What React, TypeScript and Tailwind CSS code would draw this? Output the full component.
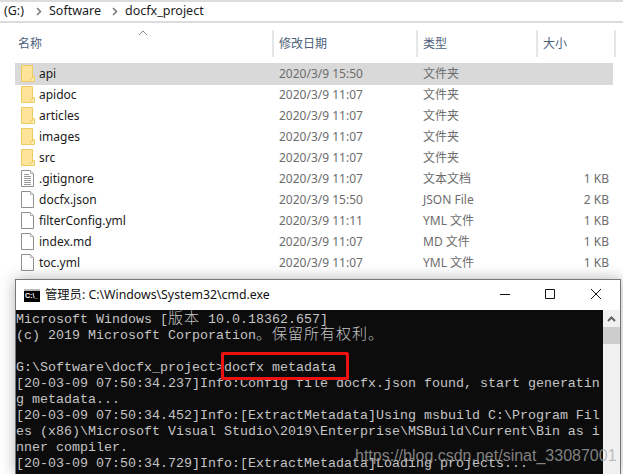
import React from "react";

type Row = { name: string; date: string; type: string; size?: string; icon: "folder" | "text" | "file" };

const rows: Row[] = [
  { name: "api", date: "2020/3/9 15:50", type: "文件夹", icon: "folder" },
  { name: "apidoc", date: "2020/3/9 11:07", type: "文件夹", icon: "folder" },
  { name: "articles", date: "2020/3/9 11:07", type: "文件夹", icon: "folder" },
  { name: "images", date: "2020/3/9 11:07", type: "文件夹", icon: "folder" },
  { name: "src", date: "2020/3/9 11:07", type: "文件夹", icon: "folder" },
  { name: ".gitignore", date: "2020/3/9 11:07", type: "文本文档", size: "1 KB", icon: "text" },
  { name: "docfx.json", date: "2020/3/9 15:50", type: "JSON File", size: "2 KB", icon: "file" },
  { name: "filterConfig.yml", date: "2020/3/9 11:11", type: "YML 文件", size: "1 KB", icon: "file" },
  { name: "index.md", date: "2020/3/9 11:07", type: "MD 文件", size: "1 KB", icon: "file" },
  { name: "toc.yml", date: "2020/3/9 11:07", type: "YML 文件", size: "1 KB", icon: "file" },
];

function FileIcon({ kind }: { kind: Row["icon"] }) {
  if (kind === "folder") {
    return (
      <svg width="14" height="17" viewBox="0 0 14 17" className="block">
        <path d="M.5.5H11.5V16.5H.5Z" fill="#fde49a" stroke="#eccb60" />
        <path d="M11.5 11.5H13.5V16.5H9.5V13.5H11.5Z" fill="#fdeeb8" stroke="#eccb60" />
      </svg>
    );
  }
  return (
    <svg width="14" height="17" viewBox="0 0 14 17" className="block">
      <path d="M.5.5H9.5L12.5 3.5V16.5H.5Z" fill="#fff" stroke="#8f8f8f" />
      <path d="M9.5.5V3.5H12.5" fill="#f0f0f0" stroke="#b0b0b0" />
      {kind === "text" && (
        <path d="M3 4.5H8M3 6.5H10M3 8.5H10M3 10.5H10M3 12.5H10M3 14.5H10" stroke="#9a9a9a" fill="none" />
      )}
    </svg>
  );
}

function Chev() {
  return (
    <svg width="6" height="9" viewBox="0 0 6 9" className="block">
      <path d="M1 1L4.5 4.5L1 8" fill="none" stroke="#777" strokeWidth="1.5" />
    </svg>
  );
}

const cjk = "font-['Noto_Sans_CJK_SC',sans-serif] text-[15px] leading-[0] tracking-[1px] font-light";

function Zh({ children }: { children: React.ReactNode }) {
  return <span className={cjk}>{children}</span>;
}

const lines: React.ReactNode[] = [
  <>Microsoft Windows [<Zh>版本</Zh> 10.0.18362.657]</>,
  <>(c) 2019 Microsoft Corporation<Zh>。保留所有权利。</Zh></>,
  "",
  "G:\\Software\\docfx_project>docfx metadata",
  "[20-03-09 07:50:34.237]Info:Config file docfx.json found, start generatin",
  "g metadata...",
  "[20-03-09 07:50:34.452]Info:[ExtractMetadata]Using msbuild C:\\Program Fil",
  "es (x86)\\Microsoft Visual Studio\\2019\\Enterprise\\MSBuild\\Current\\Bin as i",
  "nner compiler.",
  "[20-03-09 07:50:34.729]Info:[ExtractMetadata]Loading projects...",
];

export default function App() {
  return (
    <div className="relative h-[474px] w-[623px] overflow-hidden bg-white flex flex-col font-['Noto_Sans','Noto_Sans_CJK_SC',sans-serif]">
      <div className="h-[279px] shrink-0 flex flex-col">
        <div className="h-[23px] shrink-0 border-t-2 border-b-2 border-[#dcdcdc] flex items-center pl-[4px] text-[12.5px] text-[#1c1c1c]">
          <span className="w-[32px]">(G:)</span>
          <Chev />
          <span className="ml-[7px] w-[63px]">Software</span>
          <Chev />
          <span className="ml-[7px]">docfx_project</span>
        </div>

        <div className="relative h-[40px] shrink-0 pl-[18px] pt-[7px] grid grid-cols-[254px_144px_120px_80px] text-[12px] text-[#4c607a] leading-[20px]">
          <svg width="10" height="6" viewBox="0 0 10 6" className="absolute left-[138px] top-[7px]">
            <path d="M1 5L5 1L9 5" fill="none" stroke="#888" />
          </svg>
          <div className="h-[27px] pt-[4px]">名称</div>
          <div className="h-[27px] border-l-2 border-[#e6e6e6] pl-[5px] pt-[4px]">修改日期</div>
          <div className="h-[27px] border-l-2 border-[#e6e6e6] pl-[5px] pt-[4px]">类型</div>
          <div className="h-[27px] border-l-2 border-r-2 border-[#e6e6e6] pl-[5px] pt-[4px]">大小</div>
        </div>

        <div className="ml-[15px] w-[598px] flex flex-col">
          {rows.map((r, i) => (
            <div
              key={r.name}
              className={`h-[21px] shrink-0 grid grid-cols-[264px_144px_120px_70px] items-center text-[12px] ${
                i === 0 ? "bg-[#d9d9d9] shadow-[0_1px_0_#d9d9d9]" : ""
              }`}
            >
              <div className="flex items-center pl-[6px] text-[#1a1a1a]">
                <FileIcon kind={r.icon} />
                <span className="ml-[4px]">{r.name}</span>
              </div>
              <div className="text-[#6d6d6d]">{r.date}</div>
              <div className="text-[#6d6d6d]">{r.type}</div>
              <div className="text-right pr-[4px] text-[#6d6d6d]">{r.size}</div>
            </div>
          ))}
        </div>
      </div>

      <div className="relative ml-[15px] w-[606px] flex-1 min-h-0 flex flex-col bg-white border-t border-r border-l border-[#777] shadow-[0_0_14px_rgba(0,0,0,0.3)]">
        <div className="h-[30px] shrink-0 flex items-center pl-[8px] text-[12px]">
          <div className="w-[16px] h-[13px] bg-black flex flex-col overflow-hidden">
            <div className="h-[2px] bg-[#b8b8b8] shrink-0" />
            <span className="font-['Liberation_Sans',sans-serif] text-[7px] leading-[10px] font-bold text-white pl-[1px]">C:\_</span>
          </div>
          <span className="ml-[5px] text-[#111] text-[12.3px]">管理员: C:\Windows\System32\cmd.exe</span>
          <div className="ml-auto flex items-center h-full">
            <svg width="120" height="30" viewBox="0 0 120 30" className="block mr-[1px]">
              <path d="M1 14.5H11" stroke="#111" fill="none" />
              <path d="M46.5 9.5H55.5V18.5H46.5Z" stroke="#111" fill="none" />
              <path d="M92 9L102 19M102 9L92 19" stroke="#111" fill="none" />
            </svg>
          </div>
        </div>
        <div className="flex-1 min-h-0 flex">
          <div className="relative flex-1 min-w-0 overflow-hidden bg-[#0c0c0c] pt-[2px] font-['Liberation_Mono',monospace] text-[13.333px] leading-[16px] text-[#c4c4c4]">
            {lines.map((l, i) => (
              <div key={i} className="h-[16px] whitespace-pre">
                {l}
              </div>
            ))}
            <div className="h-[16px] whitespace-pre text-[#e6e58a] pt-[1px]">
              [20-03-09 07:50:35.874]Warning:[ExtractMetadata](G:/Software/MetaTemp/F
            </div>
            <div className="absolute left-[205px] top-[42px] w-[128px] h-[28px] border-[3px] border-[#ee1111] rounded-[2px]" />
          </div>
          <div className="w-[17px] shrink-0 bg-[#f0f0f0] flex flex-col items-center pt-[6px]">
            <svg width="9" height="6" viewBox="0 0 9 6" className="block">
              <path d="M1 5L4.5 1.5L8 5" fill="none" stroke="#606060" strokeWidth="2" />
            </svg>
            <div className="mt-[5px] h-[17px] w-full bg-[#cdcdcd]" />
          </div>
        </div>
      </div>

      <div className="absolute left-[355px] top-[445px] font-['Liberation_Sans',sans-serif] text-[16px] leading-[22px] text-[#aaaaaa]/75 whitespace-pre">
        https://blog.csdn.net/sinat_33087001
      </div>
    </div>
  );
}
